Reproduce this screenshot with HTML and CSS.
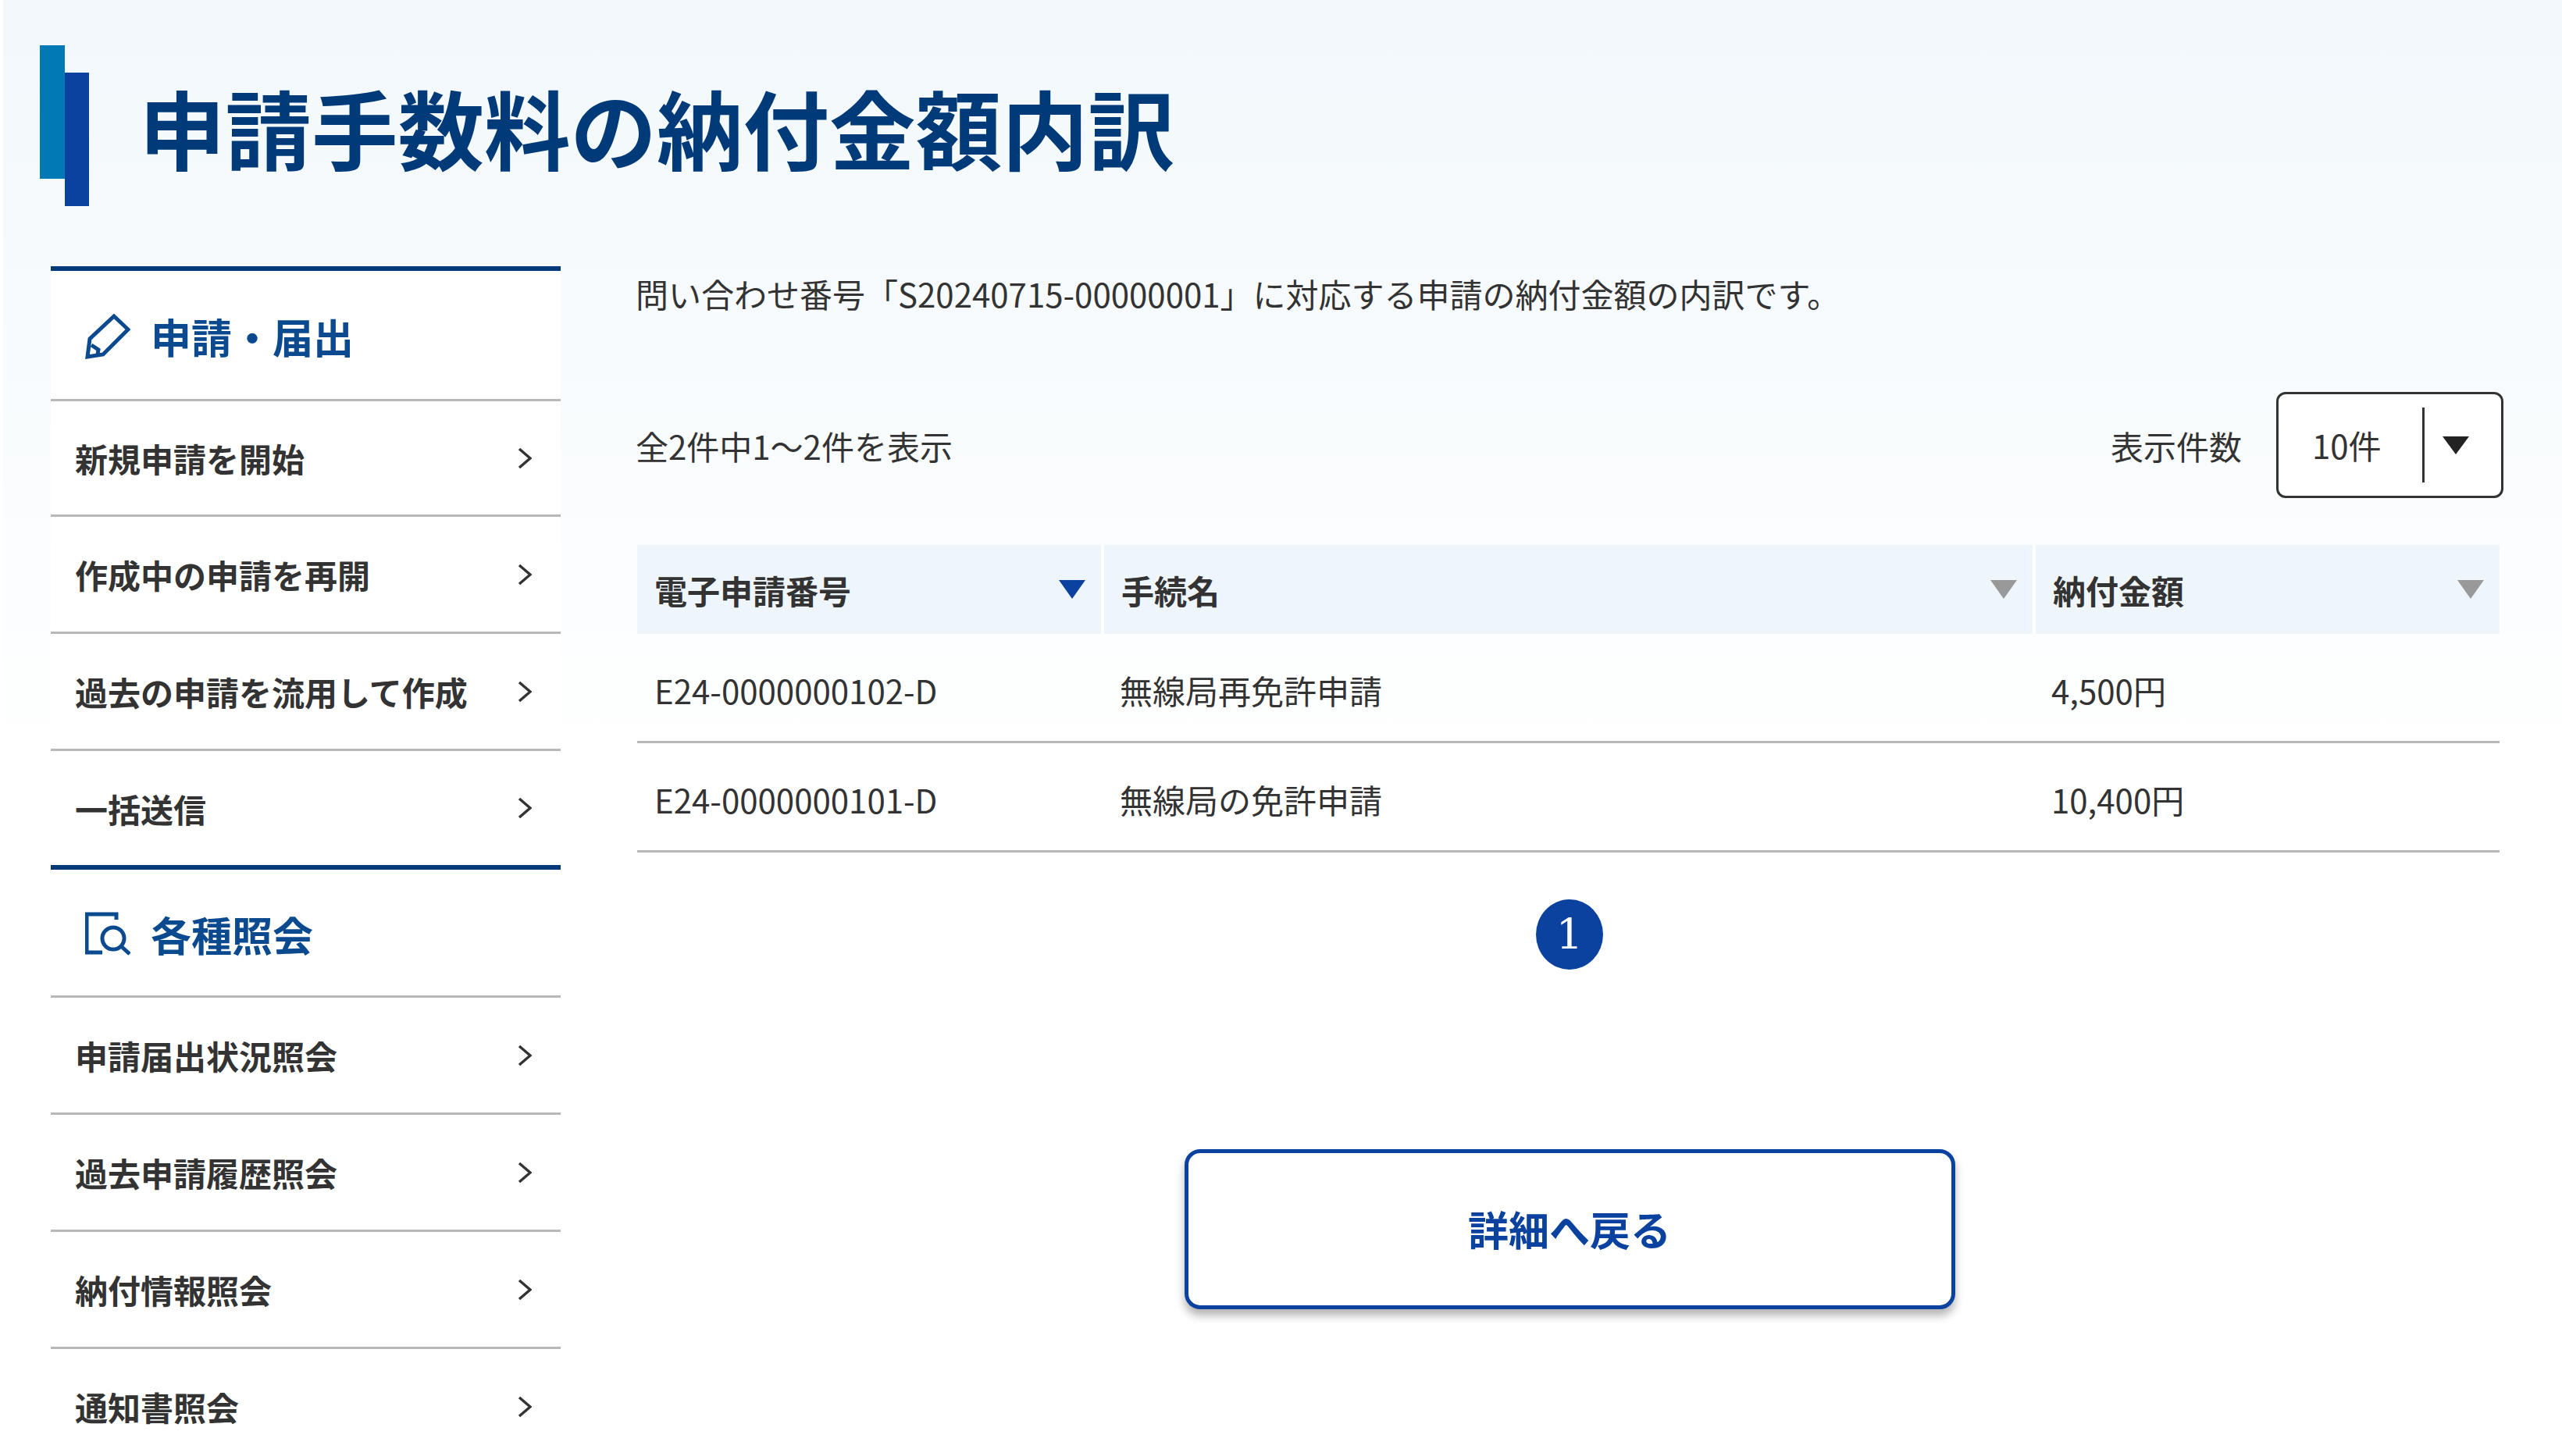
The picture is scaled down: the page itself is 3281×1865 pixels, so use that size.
FILE: index.html
```html
<!DOCTYPE html>
<html lang="ja">
<head>
    <meta charset="UTF-8">
    <title>申請手数料の納付金額内訳</title>
    <link rel="stylesheet" href="styles.css">
</head>
<body>
    <div class="page">
        <header class="page-header">
            <div class="title-bars">
                <span class="bar-teal"></span>
                <span class="bar-blue"></span>
            </div>
            <h1 class="page-title">申請手数料の納付金額内訳</h1>
        </header>

        <div class="content">
            <nav class="sidebar">
                <div class="side-heading">
                    <svg class="side-icon" viewBox="0 0 58 58" fill="none" stroke="#0b4a8f" stroke-width="5">
                        <path d="M37 3 L55 20 L23 52 L3 55 L6 32 Z"/>
                        <path d="M8 40 L17 46 L16 52"/>
                    </svg>
                    <span>申請・届出</span>
                </div>
                <a class="side-item first"><span>新規申請を開始</span><svg class="chevron" viewBox="0 0 18 28"><path d="M2 2 L16 14 L2 26"/></svg></a>
                <a class="side-item"><span>作成中の申請を再開</span><svg class="chevron" viewBox="0 0 18 28"><path d="M2 2 L16 14 L2 26"/></svg></a>
                <a class="side-item"><span>過去の申請を流用して作成</span><svg class="chevron" viewBox="0 0 18 28"><path d="M2 2 L16 14 L2 26"/></svg></a>
                <a class="side-item last"><span>一括送信</span><svg class="chevron" viewBox="0 0 18 28"><path d="M2 2 L16 14 L2 26"/></svg></a>

                <div class="side-heading second">
                    <svg class="side-icon" viewBox="0 0 58 58" fill="none" stroke="#0b4a8f" stroke-width="5">
                        <path d="M22 53 H2 V4 H40 V11"/>
                        <circle cx="36" cy="35" r="14"/>
                        <path d="M46 45 L57 55"/>
                    </svg>
                    <span>各種照会</span>
                </div>
                <a class="side-item"><span>申請届出状況照会</span><svg class="chevron" viewBox="0 0 18 28"><path d="M2 2 L16 14 L2 26"/></svg></a>
                <a class="side-item"><span>過去申請履歴照会</span><svg class="chevron" viewBox="0 0 18 28"><path d="M2 2 L16 14 L2 26"/></svg></a>
                <a class="side-item"><span>納付情報照会</span><svg class="chevron" viewBox="0 0 18 28"><path d="M2 2 L16 14 L2 26"/></svg></a>
                <a class="side-item"><span>通知書照会</span><svg class="chevron" viewBox="0 0 18 28"><path d="M2 2 L16 14 L2 26"/></svg></a>
            </nav>

            <main class="main">
                <p class="lead">問い合わせ番号「S20240715-00000001」に対応する申請の納付金額の内訳です。</p>

                <div class="toolbar">
                    <div class="count">全2件中1～2件を表示</div>
                    <div class="per-page">
                        <span>表示件数</span>
                        <div class="select">
                            <span class="select-value">10件</span>
                            <span class="select-arrow"></span>
                        </div>
                    </div>
                </div>

                <table class="result-table">
                    <thead>
                        <tr>
                            <th class="col-no"><div class="th-inner">電子申請番号<span class="sort active"></span></div></th>
                            <th class="col-name"><div class="th-inner">手続名<span class="sort"></span></div></th>
                            <th class="col-fee"><div class="th-inner">納付金額<span class="sort"></span></div></th>
                        </tr>
                    </thead>
                    <tbody>
                        <tr>
                            <td>E24-0000000102-D</td>
                            <td>無線局再免許申請</td>
                            <td>4,500円</td>
                        </tr>
                        <tr>
                            <td>E24-0000000101-D</td>
                            <td>無線局の免許申請</td>
                            <td>10,400円</td>
                        </tr>
                    </tbody>
                </table>

                <div class="pager"><span class="page-current">1</span></div>

                <div class="actions">
                    <button class="back-button">詳細へ戻る</button>
                </div>
            </main>
        </div>
    </div>
</body>
</html>
```

FILE: styles.css
```css
html, body {
    margin: 0;
    height: 100%;
    overflow: hidden;
    background-color: #ffffff;
}

body {
    font-family: "Noto Sans CJK JP", "Noto Sans", sans-serif;
    font-size: 42px;
    color: #333333;
}

.page {
    height: 100%;
    margin-left: 4px;
    padding-top: 58px;
    box-sizing: border-box;
    background: linear-gradient(#f2f8fc 0, #fbfdfe 700px, #ffffff 1000px);
}

.page-header {
    display: flex;
    align-items: flex-start;
    height: 206px;
    margin-left: 47px;
    margin-bottom: 77px;
}

.title-bars {
    display: flex;
    flex-shrink: 0;
}

.bar-teal {
    width: 32px;
    height: 171px;
    background-color: #0079b4;
}

.bar-blue {
    width: 31px;
    height: 171px;
    margin-top: 35px;
    background-color: #0c429f;
}

.page-title {
    margin: 33px 0 0 64px;
    font-size: 110.5px;
    line-height: 142px;
    font-weight: 700;
    color: #013a78;
    white-space: nowrap;
}

.content {
    display: flex;
    align-items: flex-start;
    margin-left: 61px;
}

.sidebar {
    flex: 0 0 653px;
    background-color: #ffffff;
    border-top: 6px solid #013a78;
}

.side-heading {
    display: flex;
    align-items: center;
    gap: 26px;
    height: 161px;
    padding-top: 3px;
    padding-left: 44px;
    border-bottom: 3px solid #b8b8b8;
    font-size: 52px;
    font-weight: 700;
    color: #0b4a8f;
}

.side-heading.second {
    height: 158px;
}

.side-icon {
    width: 58px;
    height: 58px;
    flex-shrink: 0;
}

.side-item {
    display: flex;
    align-items: center;
    justify-content: space-between;
    height: 147px;
    padding: 0 37px 0 31px;
    border-bottom: 3px solid #b8b8b8;
    font-weight: 700;
    color: #333333;
}

.side-item.first {
    height: 145px;
}

.side-item.last {
    height: 146px;
    border-bottom: 6px solid #013a78;
}

.chevron {
    width: 18px;
    height: 28px;
    fill: none;
    stroke: #333333;
    stroke-width: 3.5;
}

.main {
    flex: 1;
    margin-left: 96px;
    margin-right: 75px;
}

.lead {
    margin: 0;
    padding-top: 5px;
    line-height: 60px;
    white-space: nowrap;
}

.toolbar {
    display: flex;
    align-items: center;
    justify-content: space-between;
    height: 136px;
    margin-top: 96px;
}

.per-page {
    display: flex;
    align-items: center;
    gap: 44px;
}

.select {
    display: flex;
    align-items: center;
    width: 291px;
    height: 136px;
    box-sizing: border-box;
    border: 3px solid #333333;
    border-radius: 12px;
    background-color: #ffffff;
}

.select-value {
    width: 187px;
    padding-left: 43px;
    box-sizing: border-box;
    border-right: 3px solid #333333;
    line-height: 96px;
}

.select-arrow {
    margin-left: 23px;
    border-left: 17px solid transparent;
    border-right: 17px solid transparent;
    border-top: 23px solid #222222;
}

.result-table {
    width: 2385px;
    margin: 60px 0 0 2px;
    border-collapse: collapse;
    table-layout: fixed;
}

.result-table th {
    box-sizing: border-box;
    height: 114px;
    padding: 0 22px;
    background-color: #eff6fb;
    border-right: 4px solid #ffffff;
    font-weight: 700;
    text-align: left;
    color: #333333;
}

.result-table th:last-child {
    border-right: none;
}

.col-no { width: 596px; }
.col-name { width: 1193px; }

.th-inner {
    display: flex;
    align-items: center;
    justify-content: space-between;
}

.sort {
    border-left: 17px solid transparent;
    border-right: 17px solid transparent;
    border-top: 24px solid #999999;
    margin-right: -2px;
}

.sort.active {
    border-top-color: #0c429f;
}

.result-table td {
    height: 131px;
    padding: 6px 22px 0;
    border-bottom: 3px solid #b8b8b8;
}

.pager {
    display: flex;
    justify-content: center;
    margin-top: 60px;
}

.page-current {
    display: flex;
    align-items: center;
    justify-content: center;
    width: 86px;
    height: 90px;
    border-radius: 50%;
    background-color: #0c429f;
    color: #ffffff;
    font-family: "DejaVu Serif", serif;
    font-size: 54px;
}

.actions {
    display: flex;
    justify-content: center;
    margin-top: 230px;
}

.back-button {
    width: 987px;
    height: 205px;
    padding-bottom: 4px;
    border: 5px solid #0c429f;
    border-radius: 20px;
    background-color: #ffffff;
    box-shadow: 0 8px 12px rgba(0, 0, 0, 0.3);
    font-family: inherit;
    font-size: 52px;
    font-weight: 700;
    color: #0c429f;
}
```
